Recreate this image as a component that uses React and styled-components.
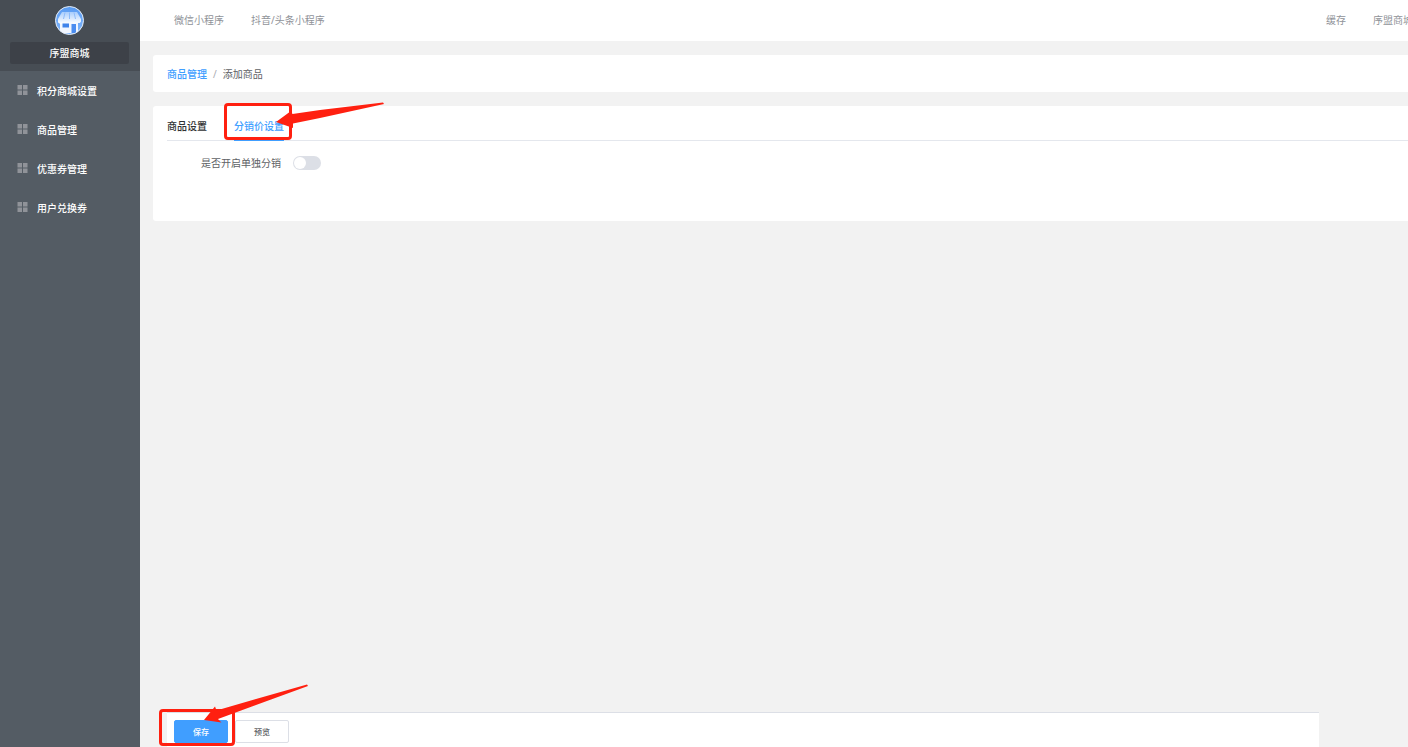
import { useState } from 'react';
import styled, { createGlobalStyle } from 'styled-components';

const GlobalStyle = createGlobalStyle`
    * {
        box-sizing: border-box;
    }

    body {
        margin: 0;
        background: #f2f2f2;
        color: #303133;
        font-family: "Noto Sans", "Noto Sans CJK SC", sans-serif;
        font-size: 10px;
        line-height: 16px;
    }

    button, input {
        font-family: inherit;
    }
`

const Layout = styled.div`
    display: flex;
    min-height: 100vh;
    overflow: hidden;
`

const Sidebar = styled.aside`
    flex: 0 0 140px;
    background: #545c64;
`

const Brand = styled.div`
    display: flex;
    flex-direction: column;
    align-items: center;
    gap: 7px;
    padding: 6px 11px 7px 10px;
    background: #474d54;
`

const BrandName = styled.div`
    width: 100%;
    padding: 3px 0;
    border-radius: 2px;
    background: #3d4148;
    color: #fff;
    text-align: center;
    font-weight: 500;
`

const MenuLink = styled.a`
    display: flex;
    align-items: center;
    gap: 9px;
    height: 39px;
    padding-left: 17px;
    color: #fff;
    font-weight: 500;
    text-decoration: none;

    svg {
        display: block;
        fill: #909399;
    }
`

const Main = styled.main`
    flex: 1;
    min-width: 0;
    display: flex;
    flex-direction: column;
`

const Topbar = styled.header`
    display: flex;
    align-items: center;
    gap: 27px;
    height: 41px;
    padding: 0 0 2px 34px;
    background: #fff;
`

const TopLink = styled.a`
    color: #909399;
    text-decoration: none;
    white-space: nowrap;
`

const Account = styled.div`
    display: flex;
    gap: 27px;
    margin-left: auto;
    margin-right: -5px;
`

const Content = styled.div`
    flex: 1;
    display: flex;
    flex-direction: column;
    gap: 14px;
    padding: 14px 0 0 13px;
`

const Card = styled.section`
    padding: ${(props) => props.$pad};
    border-radius: 3px 0 0 3px;
    background: #fff;
`

const Breadcrumb = styled.nav`
    display: flex;
    gap: 6px;
    color: #606266;

    a {
        color: #409eff;
        font-weight: 500;
        text-decoration: none;
    }

    i {
        color: #a8abb2;
        font-style: normal;
    }
`

const Tabs = styled.div`
    display: flex;
    gap: 27px;
    border-bottom: 1px solid #e4e7ed;
`

const Tab = styled.button`
    height: 35px;
    margin-bottom: -1px;
    padding: 6px 0 0;
    border: 0;
    border-bottom: 1px solid ${(props) => (props.$active ? '#409eff' : 'transparent')};
    background: none;
    color: ${(props) => (props.$active ? '#409eff' : '#303133')};
    font-size: 10px;
    font-weight: 500;
    line-height: 16px;
`

const FormRow = styled.div`
    display: flex;
    align-items: center;
    gap: 12px;
    padding: 14px 0 50px 34px;
    color: #606266;
`

const Switch = styled.input`
    appearance: none;
    width: 28px;
    height: 14px;
    margin: 0;
    padding: 1px;
    border-radius: 7px;
    background: ${(props) => (props.checked ? '#409eff' : '#dcdfe6')};

    &::before {
        content: "";
        display: block;
        width: 12px;
        height: 12px;
        margin-left: ${(props) => (props.checked ? '14px' : '0')};
        border-radius: 50%;
        background: #fff;
    }
`

const Footer = styled.footer`
    display: flex;
    gap: 7px;
    margin: auto 89px 0 14px;
    padding: 7px 7px 4px;
    border-top: 1px solid #dcdfe6;
    background: #fff;
`

const Button = styled.button`
    width: 54px;
    height: 23px;
    padding: 0;
    border: 1px solid ${(props) => (props.$primary ? '#409eff' : '#dcdfe6')};
    border-radius: 2px;
    background: ${(props) => (props.$primary ? '#409eff' : '#fff')};
    color: ${(props) => (props.$primary ? '#fff' : '#606266')};
    font-size: 8px;
    font-weight: 500;
`

const Marked = styled.div`
    position: relative;
    display: flex;
`

const MarkBox = styled.span`
    position: absolute;
    inset: ${(props) => props.$inset};
    border: 3px solid #ff2010;
    border-radius: 4px;
    pointer-events: none;
`

const MarkArrow = styled.svg`
    position: absolute;
    top: ${(props) => props.$top};
    left: ${(props) => props.$left};
    fill: #ff2010;
    pointer-events: none;
`

const menu = ['积分商城设置', '商品管理', '优惠券管理', '用户兑换券']

const tabs = ['商品设置', '分销价设置']

const ShopLogo = () => (
    <svg width="29" height="29" viewBox="0 0 29 29">
        <defs>
            <linearGradient id="sky" x1="0" y1="0" x2="0" y2="1">
                <stop offset="0" stopColor="#5a9cf3" />
                <stop offset="1" stopColor="#7fb4fa" />
            </linearGradient>
            <linearGradient id="awning" x1="0" y1="0" x2="0" y2="1">
                <stop offset="0" stopColor="#a9cdfc" />
                <stop offset="1" stopColor="#ffffff" />
            </linearGradient>
            <clipPath id="disc">
                <circle cx="14.5" cy="14.5" r="14" />
            </clipPath>
        </defs>
        <circle cx="14.5" cy="14.5" r="14" fill="url(#sky)" />
        <g clipPath="url(#disc)">
            <path d="M5 14h18v13H5z" fill="#f1f6ff" />
            <path d="M7 6h15l4 7v1.500a2 2 0 0 1-4 1a2.200 2 0 0 1-4.500 0a2.200 2 0 0 1-4.500 0a2.200 2 0 0 1-4.500 0a2 2 0 0 1-5.500-1V13z" fill="url(#awning)" />
            <path d="M10 6.500L8.500 13M14.500 6.500V13M19 6.500L20.500 13" stroke="#8dbbfa" strokeWidth="1" fill="none" />
            <path d="M7.500 17.500h6.500v4H7.500z" fill="#3f83ea" />
            <path d="M16.500 18h4.500v9h-4.500z" fill="#4a8cf0" />
        </g>
        <circle cx="14.5" cy="14.5" r="14" fill="none" stroke="#e6edf5" />
    </svg>
)

const GridIcon = () => (
    <svg width="11" height="11" viewBox="0 0 11 11">
        <path d="M0.5 0H5V4.5H0.5zM6 0H10.5V4.5H6zM0.5 5.5H5V10H0.5zM6 5.5H10.5V10H6z" />
    </svg>
)

const App = () => {

    const [active, setActive] = useState(1)

    const [single, setSingle] = useState(false)

    return (
        <Layout>
            <GlobalStyle />
            <Sidebar>
                <Brand>
                    <ShopLogo />
                    <BrandName>序盟商城</BrandName>
                </Brand>
                <nav>
                    {menu.map((name) => (
                        <MenuLink href="#" key={name}>
                            <GridIcon />
                            {name}
                        </MenuLink>
                    ))}
                </nav>
            </Sidebar>
            <Main>
                <Topbar>
                    <TopLink href="#">微信小程序</TopLink>
                    <TopLink href="#">抖音/头条小程序</TopLink>
                    <Account>
                        <TopLink href="#">缓存</TopLink>
                        <TopLink href="#">序盟商城</TopLink>
                    </Account>
                </Topbar>
                <Content>
                    <Card $pad="11px 14px 10px">
                        <Breadcrumb>
                            <a href="#">商品管理</a>
                            <i>/</i>
                            <span>添加商品</span>
                        </Breadcrumb>
                    </Card>
                    <Card $pad="0 0 0 14px">
                        <Tabs>
                            <Tab $active={active === 0} onClick={() => setActive(0)}>{tabs[0]}</Tab>
                            <Marked>
                                <Tab $active={active === 1} onClick={() => setActive(1)}>{tabs[1]}</Tab>
                                <MarkBox $inset="-3px -8px 0 -10px" />
                                <MarkArrow $top="-4px" $left="42px" width="110" height="27" viewBox="0 0 110 27">
                                    <path d="M0 20L15 9L16.500 12L44 8L107 0.500L108 2L44 16L17 21.500L17 26z" />
                                </MarkArrow>
                            </Marked>
                        </Tabs>
                        <FormRow>
                            <label htmlFor="single">是否开启单独分销</label>
                            <Switch
                                type="checkbox"
                                role="switch"
                                id="single"
                                checked={single}
                                onChange={(e) => setSingle(e.target.checked)}
                            />
                        </FormRow>
                    </Card>
                    <Footer>
                        <Marked>
                            <Button $primary>保存</Button>
                            <MarkBox $inset="-11px -7px -3px -15px" />
                            <MarkArrow $top="-36px" $left="30px" width="106" height="40" viewBox="0 0 106 40">
                                <path d="M0 36L11 22.500L12.500 26.500L52 15L103 0.500L104 2L52 21L14 35L17.500 38.500z" />
                            </MarkArrow>
                        </Marked>
                        <Button>预览</Button>
                    </Footer>
                </Content>
            </Main>
        </Layout>
    )
}

export default App;
